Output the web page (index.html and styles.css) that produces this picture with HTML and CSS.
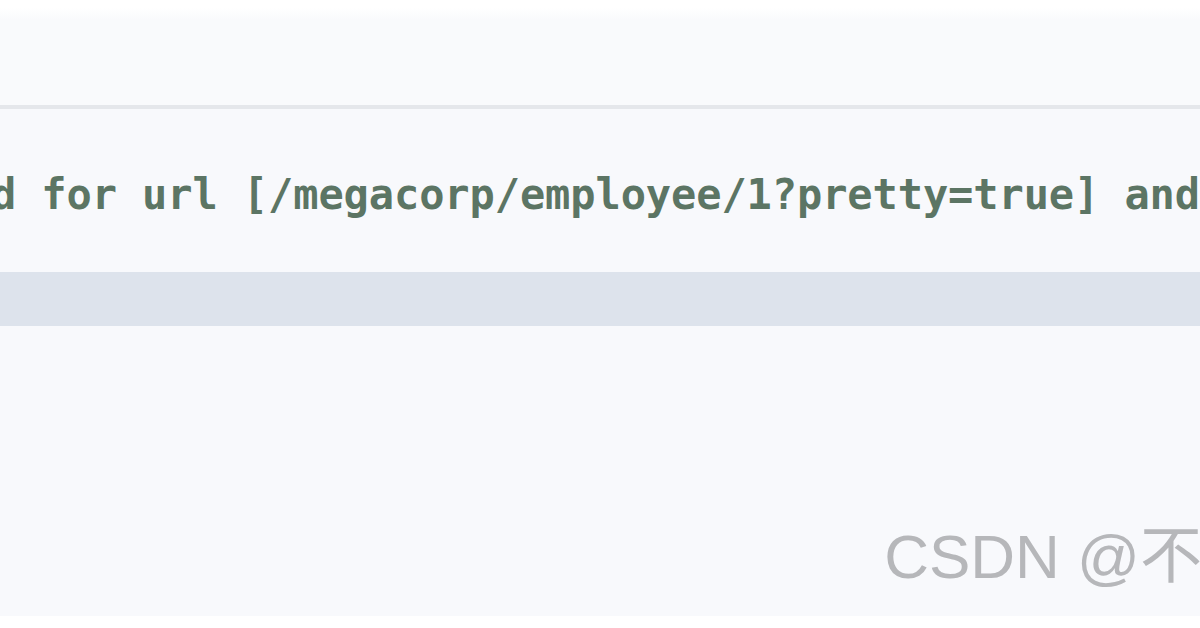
FILE: index.html
```html
<!DOCTYPE html>
<html lang="en">
<head>
<meta charset="utf-8">
<title>Code line</title>
<link rel="stylesheet" href="styles.css">
</head>
<body>
<div class="page">
  <div class="top-gap"></div>
  <div class="header"></div>
  <div class="code-area">
    <div class="code-line">d for url [/megacorp/employee/1?pretty=true] and</div>
  </div>
  <div class="highlight"></div>
  <div class="lower">
    <div class="watermark">CSDN @不</div>
  </div>
  <div class="bottom-gap"></div>
</div>
</body>
</html>
```
FILE: styles.css
```css
html, body {
  margin: 0;
  padding: 0;
  background: #ffffff;
  overflow: hidden;
}

.page {
  width: 1200px;
  height: 628px;
  display: flex;
  flex-direction: column;
  overflow: hidden;
}

.top-gap {
  height: 20px;
  background: linear-gradient(#ffffff 40%, #f9fafc);
}

.header {
  height: 85px;
  background: #f9fafc;
  border-bottom: 4px solid #e5e7eb;
}

.code-area {
  height: 163px;
  background: #f8f9fc;
  display: flex;
  align-items: center;
  overflow: hidden;
}

.code-line {
  margin-left: -9px;
  margin-top: 8px;
  font-family: "DejaVu Sans Mono", "Liberation Mono", monospace;
  font-size: 42px;
  font-weight: bold;
  color: #5c7564;
  white-space: pre;
  letter-spacing: -0.1px;
}

.highlight {
  height: 54px;
  background: #dde3ec;
}

.lower {
  flex: 1;
  background: #f8f9fc;
  display: flex;
  justify-content: flex-end;
  align-items: flex-end;
  overflow: hidden;
}

.watermark {
  font-family: "Liberation Sans", "Noto Sans CJK SC", sans-serif;
  font-size: 62px;
  color: #b6b7ba;
  white-space: nowrap;
  margin-right: -2px;
  margin-bottom: 20px;
}

.bottom-gap {
  height: 12px;
  background: #ffffff;
}
```
